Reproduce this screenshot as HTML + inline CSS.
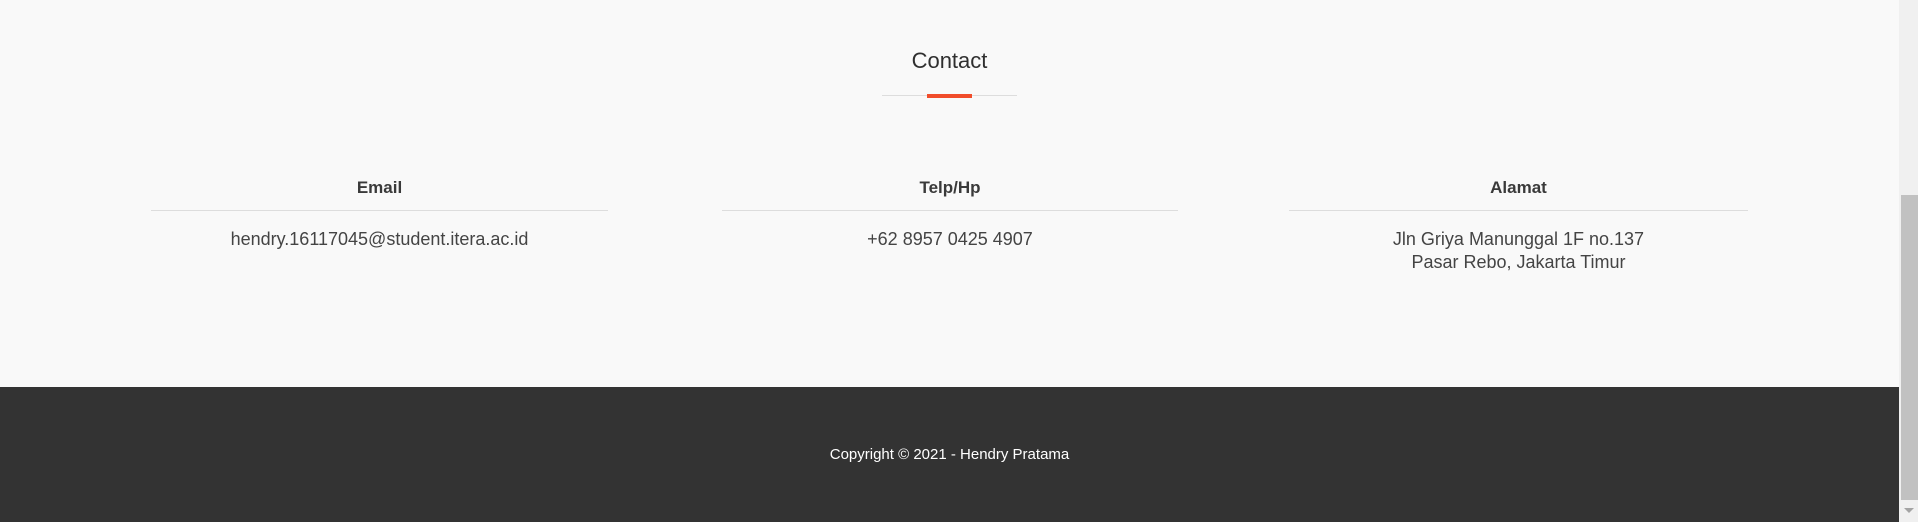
<!DOCTYPE html>
<html><head><style>
body{margin:0;width:1918px;height:522px;overflow:hidden;background:#f9f9f9;font-family:"Liberation Sans",sans-serif;position:relative;color:#333}
.a{position:absolute;text-align:center}
.t{left:0;width:1899px;top:48px;font-size:22px;color:#2f2f2f}
.ln{position:absolute;height:1px;background:#ddd}
.h{font-size:17px;font-weight:bold;color:#3a3a3a;top:178px}
.v{font-size:18px;color:#444;top:228px;line-height:23px}
footer{position:absolute;left:0;top:387px;width:1899px;height:135px;background:#333}
.c{position:absolute;top:59px;width:100%;text-align:center;color:#fff;font-size:15px}
.sb{position:absolute;left:1899px;top:0;width:19px;height:522px;background:#f0f0f0}
.th{position:absolute;left:2px;top:195px;width:17px;height:305px;background:#c1c1c1}
</style></head><body>
<div class="a t">Contact</div>
<div class="ln" style="left:882px;width:135px;top:95px"></div>
<div class="ln" style="left:927px;width:45px;top:94px;height:4px;background:#f14d2b"></div>
<div class="a h" style="left:151px;width:457px">Email</div>
<div class="ln" style="left:151px;width:457px;top:210px"></div>
<div class="a v" style="left:151px;width:457px">hendry.16117045@student.itera.ac.id</div>
<div class="a h" style="left:722px;width:456px">Telp/Hp</div>
<div class="ln" style="left:722px;width:456px;top:210px"></div>
<div class="a v" style="left:722px;width:456px">+62 8957 0425 4907</div>
<div class="a h" style="left:1289px;width:459px">Alamat</div>
<div class="ln" style="left:1289px;width:459px;top:210px"></div>
<div class="a v" style="left:1289px;width:459px">Jln Griya Manunggal 1F no.137<br>Pasar Rebo, Jakarta Timur</div>
<footer><div class="c">Copyright © 2021 - Hendry Pratama</div></footer>
<div class="sb"><div class="th"></div><div style="position:absolute;left:5px;top:508px;width:0;height:0;border-left:5px solid transparent;border-right:5px solid transparent;border-top:5px solid #a3a3a3"></div></div>
</body></html>
